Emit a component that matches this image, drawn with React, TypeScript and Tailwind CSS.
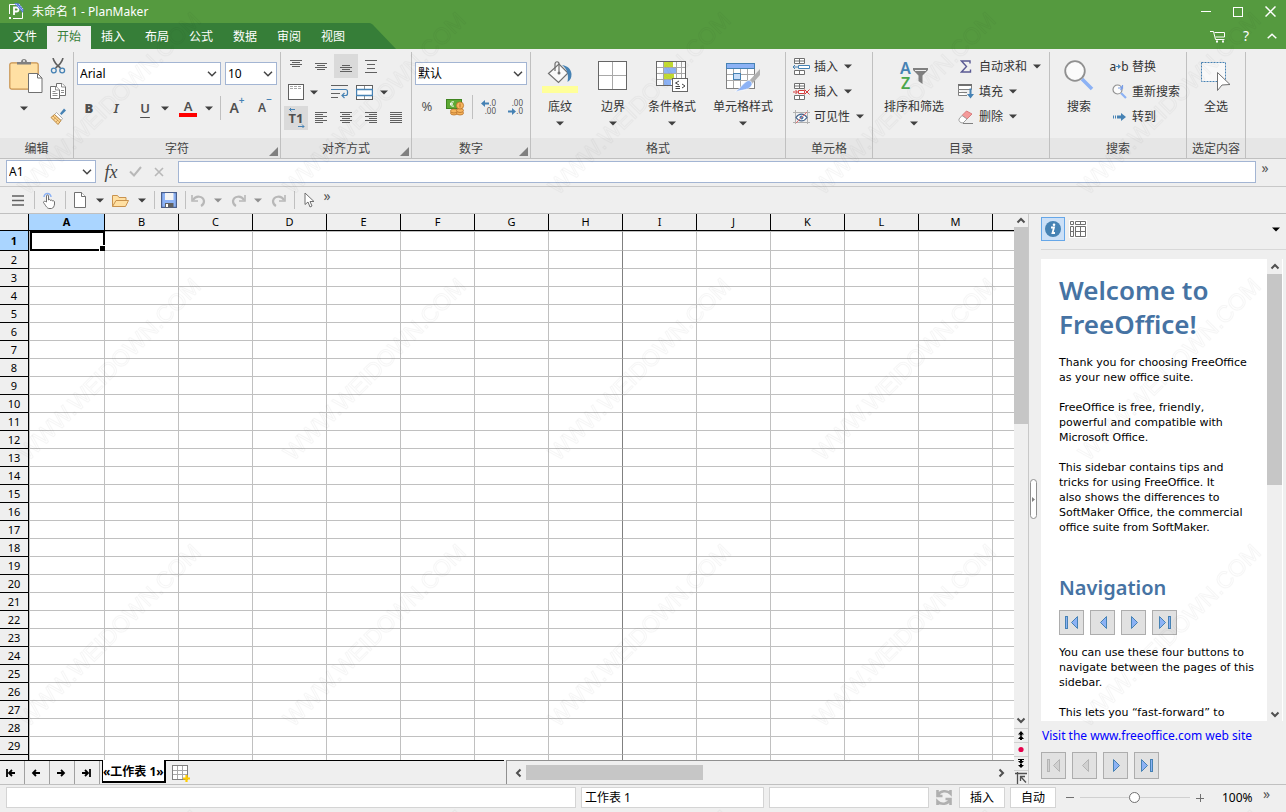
import React, { useLayoutEffect, useRef, useState } from 'react';

const uiFont = "font-['Noto_Sans','Noto_Sans_CJK_SC',sans-serif]";

const tabs = ['文件', '开始', '插入', '布局', '公式', '数据', '审阅', '视图'];

/* ---------- small building blocks ---------- */

const Caret = ({ className = 'text-[#404040]' }: { className?: string }) => (
  <svg width="8" height="5" viewBox="0 0 8 5" className={className} aria-hidden="true">
    <path d="M0 .5h8L4 4.5z" fill="currentColor" />
  </svg>
);

const Chevron = ({ className = '' }: { className?: string }) => (
  <svg width="10" height="6" viewBox="0 0 10 6" className={className} aria-hidden="true">
    <path d="M1 .8 5 4.8 9 .8" fill="none" stroke="#444" strokeWidth="1.5" />
  </svg>
);

const ScrollArrow = ({ dir }: { dir: 'up' | 'down' | 'left' | 'right' }) => {
  const paths = {
    up: 'M1.5 6.5 5 3l3.5 3.5',
    down: 'M1.5 3.5 5 7l3.5-3.5',
    left: 'M6.5 1.5 3 5l3.5 3.5',
    right: 'M3.5 1.5 7 5 3.5 8.5',
  };
  return (
    <svg width="10" height="10" viewBox="0 0 10 10" aria-hidden="true">
      <path d={paths[dir]} fill="none" stroke="#505050" strokeWidth="2" />
    </svg>
  );
};

type ComboProps = { label: string; options: string[]; className: string };

const Combo: React.FC<ComboProps> = ({ label, options, className }) => (
  <div className={`relative ${className}`}>
    <select
      aria-label={label}
      className="block h-full w-full appearance-none border border-[#a3b5d3] bg-white pl-[2px] text-xs text-black outline-none"
    >
      {options.map((o) => (
        <option key={o}>{o}</option>
      ))}
    </select>
    <Chevron className="pointer-events-none absolute top-1/2 right-1 -translate-y-1/2" />
  </div>
);

type GroupProps = { title: string; width: string; corner?: boolean; children: React.ReactNode };

const Group: React.FC<GroupProps> = ({ title, width, corner, children }) => (
  <section className={`flex shrink-0 flex-col border-r border-[#c0c0c0] ${width}`}>
    <div className="flex h-[86px]">{children}</div>
    <div className="relative h-5 bg-[#e6e6e6] pt-px text-center text-xs leading-5 text-[#444]">
      {title}
      {corner && (
        <svg width="9" height="9" viewBox="0 0 9 9" className="absolute right-[2px] bottom-[2px]" aria-hidden="true">
          <path d="M9 0v9H0z" fill="#808080" />
        </svg>
      )}
    </div>
  </section>
);

const IconButton = ({ label, className = 'w-6', active, children }: { label: string; className?: string; active?: boolean; children: React.ReactNode }) => (
  <button aria-label={label} className={`flex h-6 shrink-0 items-center justify-center ${active ? 'bg-[#dadada]' : ''} ${className}`}>
    {children}
  </button>
);

const BigButton = ({ label, width, caret = true, children }: { label: string; width: string; caret?: boolean; children: React.ReactNode }) => (
  <button className={`flex shrink-0 flex-col items-center pt-1 text-xs text-[#333] ${width}`}>
    <span className="mb-px flex h-10 items-center justify-center">{children}</span>
    <span className="leading-5 whitespace-nowrap">{label}</span>
    {caret && <Caret className="mt-1 text-[#404040]" />}
  </button>
);

const RowButton = ({ label, caret, children }: { label: string; caret?: boolean; children: React.ReactNode }) => (
  <button className="flex h-[25px] items-center text-xs text-[#333]">
    <span className="mr-1 flex w-[18px] justify-center">{children}</span>
    <span className="whitespace-nowrap">{label}</span>
    {caret && <Caret className="ml-[6px] text-[#404040]" />}
  </button>
);

const Separator = ({ className = 'h-6' }: { className?: string }) => <div className={`w-px shrink-0 bg-[#c0c0c0] ${className}`} />;

const Lines = ({ rows: list }: { rows: [number, number, number][] }) => (
  <svg width="14" height="16" viewBox="0 0 14 16" aria-hidden="true">
    {list.map(([x, y, w], i) => (
      <rect key={i} x={x} y={y} width={w} height="1" fill="#606060" />
    ))}
  </svg>
);

/* ---------- title bar ---------- */

const TitleBar = () => (
  <header className="shrink-0 bg-[#559a3f] text-xs text-white">
    <div className="flex h-[23px] items-center">
      <svg width="17" height="17" viewBox="0 0 17 17" className="ml-2" aria-hidden="true">
        <path d="M1.500 11V1.500H10M14.500 8v7.500H5" fill="none" stroke="#fff" />
        <path d="M6 12V4.500h2.500a2 2 0 0 1 0 4H6" fill="none" stroke="#fff" strokeWidth="1.800" />
        <rect x="1" y="14" width="2" height="2" fill="#fff" />
        <path d="m6 0 5 .5 4.500 6L15 10z" fill="#5b7be0" />
        <path d="m8 1 7 7M11 1l4 5" stroke="#dfe6ff" strokeWidth=".8" strokeDasharray="1.500 1" />
      </svg>
      <h1 className="ml-[7px] flex-1">未命名 1 - PlanMaker</h1>
      <button aria-label="最小化" className="flex h-full w-8 items-center justify-center">
        <span className="h-px w-[10px] bg-white" />
      </button>
      <button aria-label="最大化" className="flex h-full w-8 items-center justify-center">
        <span className="size-[10px] border border-white" />
      </button>
      <button aria-label="关闭" className="flex h-full w-8 items-center justify-center">
        <svg width="11" height="11" viewBox="0 0 11 11" aria-hidden="true">
          <path d="m.5.5 10 10m0-10-10 10" stroke="#fff" strokeWidth="1.500" />
        </svg>
      </button>
    </div>
    <div className="flex h-[26px]">
      <nav className="flex items-end bg-[#367e38] pr-[13px] pl-[3px]">
        {tabs.map((t) => (
          <button key={t} className={`h-[23px] w-11 pb-px ${t === '开始' ? 'bg-[#efefef] text-[#367e38]' : ''}`}>
            {t}
          </button>
        ))}
      </nav>
      <svg width="28" height="26" viewBox="0 0 28 26" aria-hidden="true">
        <path d="M0 0c4 0 5 2 7 4l21 22H0z" fill="#367e38" />
      </svg>
      <div className="ml-auto flex items-center">
        <button aria-label="购物车" className="mr-[2px] flex w-7 justify-center">
          <svg width="16" height="13" viewBox="0 0 16 13" fill="none" stroke="#fff" aria-hidden="true">
            <path d="M0 1.500h3.500l2 8h9M4.500 2.500h10v4.500H5.500" />
            <path d="M6 11.500h2m4 0h2" strokeWidth="2" />
          </svg>
        </button>
        <button aria-label="帮助" className="w-6 text-sm leading-6">?</button>
        <button aria-label="折叠功能区" className="flex w-7 justify-center">
          <svg width="10" height="6" viewBox="0 0 10 6" aria-hidden="true">
            <path d="m.7 5.300 4.300-4 4.300 4" fill="none" stroke="#fff" strokeWidth="1.500" />
          </svg>
        </button>
      </div>
    </div>
  </header>
);

/* ---------- ribbon ---------- */

const EditGroup = () => (
  <Group title="编辑" width="w-[74px]">
    <button aria-label="粘贴" className="ml-2 flex w-9 flex-col items-center pt-[6px]">
      <svg width="34" height="36" viewBox="0 0 34 36" aria-hidden="true">
        <rect x=".8" y="4.800" width="28.400" height="26.400" rx="2" fill="#ffe0a3" stroke="#c8924e" strokeWidth="1.200" />
        <path d="M8 6.500V4h4c0-4 6-4 6 0h4v2.500z" fill="#808080" />
        <circle cx="15" cy="3" r="1" fill="#efefef" />
        <path d="M19.500 15.500h9l4.500 4.500v14.500H19.500z" fill="#fff" stroke="#707070" />
        <path d="M28.500 15.500V20H33" fill="none" stroke="#707070" />
      </svg>
      <Caret className="mt-3 mr-1 text-[#404040]" />
    </button>
    <div className="ml-1 flex flex-col gap-px pt-[2px]">
      <IconButton label="剪切" className="w-5">
        <svg width="16" height="16" viewBox="0 0 16 16" fill="none" aria-hidden="true">
          <path d="M3 0c1 4 3.500 7 7.500 10M13 0c-1 4-3.500 7-7.500 10" stroke="#606060" strokeWidth="1.600" />
          <circle cx="3.800" cy="12.500" r="2.400" stroke="#4682b4" strokeWidth="1.300" />
          <circle cx="12.200" cy="12.500" r="2.400" stroke="#4682b4" strokeWidth="1.300" />
        </svg>
      </IconButton>
      <IconButton label="复制" className="w-5">
        <svg width="16" height="16" viewBox="0 0 16 16" fill="#fff" stroke="#707070" aria-hidden="true">
          <path d="M6.500 12.500v-12H12L15.500 4v8.500z" />
          <path d="M.5 15.500v-12H6L9.500 7v8.500z" />
          <path d="M5.500 3.500V7h4M11.500.5V4h4M2.500 8.500h3m-3 2h5m-5 2h5M11 7.500h3m-3 2h3" strokeWidth=".8" />
        </svg>
      </IconButton>
      <IconButton label="格式刷" className="w-5">
        <svg width="17" height="17" viewBox="0 0 17 17" aria-hidden="true">
          <path d="m10 5.500 4-5 2 2-4.500 4.500z" fill="#4682b4" />
          <path d="m6.500 4.500 6 6-1.500 2L4.500 6.500z" fill="#fff" stroke="#909090" strokeWidth=".7" />
          <path d="M4.500 6.500 11 12.500 8 16.500 1 9.500z" fill="#ffd591" stroke="#b98843" />
          <path d="m3 8 6.500 6M5.500 10l-2 1.500m4.500.500-2 2" stroke="#b98843" strokeWidth=".7" />
        </svg>
      </IconButton>
    </div>
  </Group>
);

const FontGroup = () => (
  <Group title="字符" width="w-[207px]" corner>
    <div className="flex flex-1 flex-col pt-[10px]">
      <div className="flex gap-1 pl-[3px]">
        <Combo label="字体" options={['Arial', 'Tahoma']} className="h-[23px] w-36" />
        <Combo label="字号" options={['10', '11', '12']} className="h-[23px] w-[52px]" />
      </div>
      <div className="mt-[11px] flex items-center pl-[2px] text-sm font-semibold text-[#505050]">
        <IconButton label="加粗" className="w-[26px] text-[13px]"><b>B</b></IconButton>
        <IconButton label="倾斜" className="w-7 text-[13px]"><i>I</i></IconButton>
        <IconButton label="下划线" className="w-[30px] text-[13px]"><span className="underline underline-offset-4">U</span></IconButton>
        <IconButton label="下划线选项" className="w-[10px]"><Caret /></IconButton>
        <IconButton label="字体颜色" className="ml-px w-[34px] flex-col">
          <span className="text-[13px] leading-[14px]">A</span>
          <span className="h-1 w-[18px] bg-[#ff0000]" />
        </IconButton>
        <IconButton label="颜色选项" className="w-2"><Caret /></IconButton>
        <Separator className="ml-[7px] h-6" />
        <IconButton label="增大字号" className="ml-[2px] w-7">
          A<span className="-mt-4 text-[10px] text-[#4682b4]">+</span>
        </IconButton>
        <IconButton label="减小字号" className="w-7 text-xs">
          A<span className="-mt-4 text-[10px] text-[#4682b4]">−</span>
        </IconButton>
      </div>
    </div>
  </Group>
);

const AlignGroup = () => (
  <Group title="对齐方式" width="w-[131px]" corner>
    <div className="flex flex-col gap-[2px] pt-[2px] pl-[3px]">
      <div className="flex gap-px">
        <IconButton label="顶端对齐"><Lines rows={[[1, 2, 12], [3, 4, 8], [1, 6, 12], [3, 8, 8]]} /></IconButton>
        <IconButton label="垂直居中"><Lines rows={[[1, 5, 12], [3, 7, 8], [1, 9, 12], [3, 11, 8]]} /></IconButton>
        <IconButton label="底端对齐" active><Lines rows={[[3, 7, 8], [1, 9, 12], [3, 11, 8], [1, 13, 12]]} /></IconButton>
        <IconButton label="分散对齐"><Lines rows={[[1, 2, 12], [3, 6, 8], [3, 10, 8], [1, 14, 12]]} /></IconButton>
      </div>
      <div className="flex">
        <IconButton label="边框">
          <svg width="16" height="16" viewBox="0 0 16 16" aria-hidden="true">
            <rect x=".5" y=".5" width="15" height="15" fill="#fff" stroke="#606060" />
            <path d="M2 2.500h12M2 4.500h12" stroke="#909090" strokeDasharray="3 1" strokeWidth=".8" />
          </svg>
        </IconButton>
        <IconButton label="边框选项" className="w-3"><Caret /></IconButton>
        <IconButton label="自动换行" className="ml-2 w-6">
          <svg width="18" height="14" viewBox="0 0 18 14" fill="none" aria-hidden="true">
            <path d="M0 .5h17M0 8.500h9M0 12.500h7" stroke="#606060" />
            <path d="M0 4.500h14.500q2 0 2 2v2q0 2-2 2H11m2.500-2.500L11 10.500l2.500 2.500" stroke="#4682b4" strokeWidth="1.200" />
          </svg>
        </IconButton>
        <IconButton label="合并单元格">
          <svg width="17" height="15" viewBox="0 0 17 15" aria-hidden="true">
            <rect x=".5" y=".5" width="16" height="14" fill="#fff" stroke="#606060" />
            <path d="M8.500 1v3m0 7v3" stroke="#909090" />
            <path d="M0 4.500h17M0 10.500h17M.5 4v7m16-7v7" stroke="#4682b4" strokeWidth="1.400" />
          </svg>
        </IconButton>
        <IconButton label="合并选项" className="ml-[3px] w-[10px]"><Caret /></IconButton>
      </div>
      <div className="flex gap-px">
        <IconButton label="文字方向" active>
          <span className="relative text-[13px] leading-4 font-bold text-[#505050]">
            T1
            <svg width="18" height="20" viewBox="0 0 18 20" className="absolute -top-[2px] -left-[1px]" fill="none" stroke="#4682b4" aria-hidden="true">
              <path d="M7 1.500H1.500M3.500-.5l-2 2 2 2M10 18.500h6m-2-2 2 2-2 2" />
            </svg>
          </span>
        </IconButton>
        <IconButton label="左对齐"><Lines rows={[[1, 2, 12], [1, 4, 8], [1, 6, 12], [1, 8, 8], [1, 10, 12], [1, 12, 8]]} /></IconButton>
        <IconButton label="居中"><Lines rows={[[1, 2, 12], [3, 4, 8], [1, 6, 12], [3, 8, 8], [1, 10, 12], [3, 12, 8]]} /></IconButton>
        <IconButton label="右对齐"><Lines rows={[[1, 2, 12], [5, 4, 8], [1, 6, 12], [5, 8, 8], [1, 10, 12], [5, 12, 8]]} /></IconButton>
        <IconButton label="两端对齐"><Lines rows={[[1, 2, 12], [1, 4, 12], [1, 6, 12], [1, 8, 12], [1, 10, 12], [1, 12, 12]]} /></IconButton>
      </div>
    </div>
  </Group>
);

const NumberGroup = () => (
  <Group title="数字" width="w-[119px]" corner>
    <div className="flex flex-1 flex-col pt-[10px] pl-[3px]">
      <Combo label="数字格式" options={['默认', '数值', '货币']} className="h-[23px] w-28" />
      <div className="mt-[10px] flex items-center text-[#555]">
        <IconButton label="百分比" className="w-6 text-[13px]">%</IconButton>
        <IconButton label="货币" className="ml-1 w-6">
          <svg width="19" height="18" viewBox="0 0 19 18" aria-hidden="true">
            <rect x=".5" y="1.500" width="15" height="9" fill="#5da934" stroke="#3f8420" />
            <path d="M8 4a2.300 2.300 0 1 0 0 4M4 5.300h3M4 6.800h3" fill="none" stroke="#fff" strokeWidth=".9" />
            <g fill="#f6b45c" stroke="#b8712a" strokeWidth=".8">
              <ellipse cx="8" cy="15" rx="3.500" ry="2" />
              <ellipse cx="8" cy="13" rx="3.500" ry="2" />
              <ellipse cx="14" cy="15" rx="3.500" ry="2" />
              <ellipse cx="14" cy="12.500" rx="3.500" ry="2" />
              <circle cx="14" cy="7.500" r="3.600" />
            </g>
            <path d="M14 5.500v4" stroke="#b8712a" />
          </svg>
        </IconButton>
        <Separator className="mr-[3px] ml-[5px] h-6" />
        <IconButton label="增加小数位" className="w-6 flex-col items-end pr-1 text-[8px] leading-[8px]">
          <span className="flex items-center self-end">
            <svg width="8" height="7" viewBox="0 0 8 7" aria-hidden="true">
              <path d="M4 0v2.500h4v2H4V7L0 3.500z" fill="#4682b4" />
            </svg>
            .0
          </span>
          <span className="self-end">.00</span>
        </IconButton>
        <IconButton label="减少小数位" className="ml-[3px] w-6 flex-col pr-1 text-[8px] leading-[8px]">
          <span className="self-end">.00</span>
          <span className="flex items-center self-end">
            <svg width="8" height="7" viewBox="0 0 8 7" aria-hidden="true">
              <path d="M4 0v2.500H0v2h4V7l4-3.500z" fill="#4682b4" />
            </svg>
            .0
          </span>
        </IconButton>
      </div>
    </div>
  </Group>
);

const FormatGroup = () => (
  <Group title="格式" width="w-[255px]">
    <div className="flex pl-[3px]">
      <BigButton label="底纹" width="w-[52px]">
        <svg width="36" height="34" viewBox="0 0 36 34" aria-hidden="true">
          <rect y="27" width="36" height="7" fill="#ffff99" />
          <path d="M6.500 14.500 17 5l9 9-9.500 9.500z" fill="#fafafa" stroke="#707070" strokeWidth="1.200" />
          <path d="M13 12V5c0-3 4-3 4 0v8" fill="none" stroke="#707070" strokeWidth="1.200" />
          <circle cx="17" cy="14" r="1.500" fill="#707070" />
          <path d="M20 6c6 1 9 4 9.500 9 0 4-1 6-4 8 1-5 1-12-5.500-17z" fill="#4682b4" />
        </svg>
      </BigButton>
      <BigButton label="边界" width="w-[54px]">
        <svg width="30" height="30" viewBox="0 0 30 30" aria-hidden="true">
          <rect x=".5" y=".5" width="28" height="28" fill="#fff" stroke="#666" />
          <path d="M14.500 1v27M1 14.500h27" stroke="#a8a8a8" />
        </svg>
      </BigButton>
      <BigButton label="条件格式" width="w-16">
        <svg width="32" height="32" viewBox="0 0 32 32" aria-hidden="true">
          <rect x=".5" y="1.500" width="29" height="24" fill="#fff" stroke="#666" />
          <path d="M8 2h9v5H8zM8 14h10v5H8z" fill="#c3dc32" />
          <path d="M8 8h12v5H8zM8 20h7v5H8z" fill="#8cb2f5" />
          <path d="M1 7.500h28M1 13.500h28M1 19.500h28M7.500 2v23M20.500 2v23M25.500 2v23" stroke="#a8a8a8" />
          <rect x="16.500" y="18.500" width="15" height="13" fill="#fff" stroke="#666" />
          <path d="m23 21-3.500 2 3.500 2M26 24l3 2-3 2M19.500 26.500H24m-4.500 2H24" fill="none" stroke="#444" />
        </svg>
      </BigButton>
      <BigButton label="单元格样式" width="w-[78px]">
        <svg width="34" height="32" viewBox="0 0 34 32" aria-hidden="true">
          <rect x=".5" y="3.500" width="28" height="25" fill="#fff" stroke="#808080" />
          <path d="M1 14.500h28M1 20.500h28M7.500 9v19M14.500 9v19M21.500 9v19" stroke="#a8a8a8" />
          <rect x=".5" y="3.500" width="28" height="5" fill="#8cb2f5" stroke="#4682b4" />
          <rect x="7.500" y="13.500" width="7" height="6" fill="#c6dcf8" stroke="#4682b4" />
          <path d="M34 9v6l-8 9-3-3z" fill="#b0b0b0" />
          <path d="M22 20.500c3 0 4 1.500 4 4-2 6-10 5-17.500 7.500 6-3 8-9 13.500-11.500z" fill="#8cb2f5" stroke="#fff" strokeWidth=".6" />
        </svg>
      </BigButton>
    </div>
  </Group>
);

const CellGroup = () => (
  <Group title="单元格" width="w-[87px]">
    <div className="flex flex-col pt-[2px] pl-[6px]">
      <RowButton label="插入" caret>
        <svg width="17" height="17" viewBox="0 0 17 17" fill="#fff" aria-hidden="true">
          <path d="M1.500.5h10v5h-10zM1.500 12.500h10v4h-10zM6.500.500v5m0 7v4M1.500 3h10" stroke="#707070" />
          <path d="M5.500 7.500h11v3h-11z" stroke="#4682b4" />
          <path d="M5 9H0m2-2L0 9l2 2" fill="none" stroke="#4682b4" />
        </svg>
      </RowButton>
      <RowButton label="插入" caret>
        <svg width="17" height="17" viewBox="0 0 17 17" fill="#fff" aria-hidden="true">
          <path d="M1.500.5h10v5h-10zM1.500 12.500h10v4h-10zM6.500.500v5m0 7v4M1.500 3h10" stroke="#707070" />
          <path d="M5.500 7.500h6v3h-6z" stroke="#d43c3c" />
          <path d="M0 9h4M2.500 7l2 2-2 2M11.500 6.500l5 5M16.500 6.500l-5 5" fill="none" stroke="#d43c3c" />
        </svg>
      </RowButton>
      <RowButton label="可见性" caret>
        <svg width="17" height="14" viewBox="0 0 17 14" fill="none" aria-hidden="true">
          <path d="M0 2.500h17M0 12.500h17M2.500 0v14M14.500 0v14" stroke="#b0b0b0" />
          <path d="M3 7.500c3-4.500 8-4.500 11 0-3 4.500-8 4.500-11 0z" fill="#fff" stroke="#46648c" strokeWidth="1.200" />
          <circle cx="8.500" cy="7.500" r="2" fill="#4682b4" />
          <path d="m3 13 11-11" stroke="#e07070" />
        </svg>
      </RowButton>
    </div>
  </Group>
);

const ContentGroup = () => (
  <Group title="目录" width="w-[177px]">
    <div className="flex pl-[3px]">
      <BigButton label="排序和筛选" width="w-[76px]">
        <span className="text-base leading-[15px] font-semibold">
          <span className="block text-[#4682b4]">A</span>
          <span className="block text-[#4ca64c]">Z</span>
        </span>
        <svg width="15" height="16" viewBox="0 0 15 16" className="ml-[2px]" aria-hidden="true">
          <path d="M0 0h15v2L9.500 7.500V16l-4-3V7.500L0 2z" fill="#808080" />
          <path d="M2 2.500h11" stroke="#efefef" />
        </svg>
      </BigButton>
      <div className="flex flex-col pt-[2px] pl-[5px]">
        <RowButton label="自动求和" caret>
          <svg width="12" height="13" viewBox="0 0 12 13" aria-hidden="true">
            <path d="M10 3.500V1H1.500l5 5.500-5 5.500h9V9.500" fill="none" stroke="#5b5b94" strokeWidth="1.400" />
          </svg>
        </RowButton>
        <RowButton label="填充" caret>
          <svg width="16" height="15" viewBox="0 0 16 15" aria-hidden="true">
            <path d="M.5 1v4.500h13V1M.5 5.500v6H9M.5 8.500H9" fill="#fff" stroke="#808080" />
            <path d="M0 0h14v2H0z" fill="#707070" />
            <path d="M11.500 4.500h2V10h2.500l-3.500 4.500L9 10h2.500z" fill="#4682b4" />
          </svg>
        </RowButton>
        <RowButton label="删除" caret>
          <svg width="16" height="14" viewBox="0 0 16 14" aria-hidden="true">
            <path d="M8.500 1 14 4l-5 5-5-3.500z" fill="#f49a9a" stroke="#d87c7c" />
            <path d="m4 5.500 5 3.500-4 4c-3 0-4.500-2-4-4z" fill="#fff" stroke="#a0a0a0" />
            <path d="M5 13.500h10" stroke="#808080" />
          </svg>
        </RowButton>
      </div>
    </div>
  </Group>
);

const SearchGroup = () => (
  <Group title="搜索" width="w-[137px]">
    <BigButton label="搜索" width="w-[58px]" caret={false}>
      <svg width="30" height="32" viewBox="0 0 30 32" aria-hidden="true">
        <path d="m18 19 10 10" stroke="#8cb2f5" strokeWidth="3.500" />
        <circle cx="11" cy="11" r="9.800" fill="#fbfbfb" stroke="#909090" strokeWidth="1.800" />
      </svg>
    </BigButton>
    <div className="flex flex-col pt-[2px] pl-[2px]">
      <RowButton label="替换">
        <span className="flex items-center text-xs leading-4">
          a
          <svg width="5" height="5" viewBox="0 0 5 5" aria-hidden="true">
            <path d="M0 2h2V0l3 2.500L2 5V3H0z" fill="#4682b4" />
          </svg>
          b
        </span>
      </RowButton>
      <RowButton label="重新搜索">
        <svg width="15" height="15" viewBox="0 0 15 15" aria-hidden="true">
          <path d="m9 9 5 5" stroke="#8cb2f5" strokeWidth="2.200" />
          <circle cx="5.500" cy="5.500" r="4.500" fill="#fbfbfb" stroke="#909090" strokeWidth="1.200" />
          <path d="M6 4h4.500V1M8.500 2.500l2 1.500L8.500 6" fill="none" stroke="#7a9fe8" strokeWidth="1.200" />
        </svg>
      </RowButton>
      <RowButton label="转到">
        <svg width="13" height="8" viewBox="0 0 13 8" aria-hidden="true">
          <path d="M0 2.500h1v3H0zM2 2.500h1v3H2zM4 2.500h4V0l5 4-5 4V5.500H4z" fill="#4682b4" />
        </svg>
      </RowButton>
    </div>
  </Group>
);

const SelectGroup = () => (
  <Group title="选定内容" width="w-[59px]">
    <BigButton label="全选" width="w-full" caret={false}>
      <svg width="30" height="32" viewBox="0 0 30 32" aria-hidden="true">
        <rect x=".5" y="2.500" width="24" height="19" fill="#f8f8f8" stroke="#4682b4" strokeDasharray="2 1" />
        <path d="M16.500 12.500v18l4.500-5.500 8-.5z" fill="#fff" stroke="#707070" />
      </svg>
    </BigButton>
  </Group>
);

const Ribbon = () => (
  <div className="flex shrink-0 border-b border-[#c0c0c0] pt-[3px]">
    <EditGroup />
    <FontGroup />
    <AlignGroup />
    <NumberGroup />
    <FormatGroup />
    <CellGroup />
    <ContentGroup />
    <SearchGroup />
    <SelectGroup />
    <div className="flex flex-1 flex-col justify-end">
      <div className="h-5 bg-[#e6e6e6]" />
    </div>
  </div>
);

/* ---------- formula bar and quick access ---------- */

const FormulaBar = () => (
  <div className="flex h-7 shrink-0 items-center border-b border-[#c8c8c8] pr-3 pb-[2px] pl-[6px]">
    <Combo label="名称框" options={['A1']} className="h-[23px] w-[90px]" />
    <button aria-label="插入函数" className="ml-[3px] w-6 font-['Liberation_Serif',serif] text-lg leading-5 text-[#444] italic">fx</button>
    <button aria-label="确认" className="flex w-6 justify-center">
      <svg width="13" height="11" viewBox="0 0 13 11" aria-hidden="true">
        <path d="m1 5.500 4 4L12 1" fill="none" stroke="#b8b8b8" strokeWidth="2" />
      </svg>
    </button>
    <button aria-label="取消" className="flex w-6 justify-center">
      <svg width="10" height="10" viewBox="0 0 10 10" aria-hidden="true">
        <path d="m1 1 8 8m0-8L1 9" stroke="#b8b8b8" strokeWidth="1.600" />
      </svg>
    </button>
    <input aria-label="编辑栏" className="ml-[7px] h-[22px] min-w-0 flex-1 border border-[#a3b5d3] bg-white px-1 text-xs outline-none" />
    <button aria-label="更多" className="w-[18px] pb-2 text-sm leading-4 text-[#555]">»</button>
  </div>
);

const Undo = ({ flip, label }: { flip?: boolean; label: string }) => (
  <IconButton label={label} className="w-5">
    <svg width="15" height="13" viewBox="0 0 15 13" className={flip ? '-scale-x-100' : ''} aria-hidden="true">
      <path d="M1 1v6h6" fill="none" stroke="#b8b8b8" strokeWidth="1.600" />
      <path d="M2 6c3-5 10-4 11 1 0 3-1 4-3 5" fill="none" stroke="#b8b8b8" strokeWidth="2.200" />
    </svg>
  </IconButton>
);

const QuickBar = () => (
  <div className="flex h-[27px] shrink-0 items-center border-b border-[#c0c0c0] pl-2">
    <IconButton label="菜单" className="w-5">
      <svg width="12" height="11" viewBox="0 0 12 11" aria-hidden="true">
        <path d="M0 1h12M0 5.500h12M0 10h12" stroke="#606060" strokeWidth="1.500" />
      </svg>
    </IconButton>
    <Separator className="ml-[6px] h-[18px]" />
    <IconButton label="触摸模式" className="ml-1 w-5">
      <svg width="14" height="18" viewBox="0 0 14 18" aria-hidden="true">
        <path d="M2 6a3.500 3.500 0 1 1 7 0" fill="none" stroke="#8cb2f5" strokeWidth="1.500" />
        <path d="M4.500 11V5c0-1.500 2-1.500 2 0v4c1-1 2-.5 2 .5 1-.8 2-.3 2 .5 1-.6 2 0 2 1v2c0 2-1.500 4.500-3 4.500H7c-2 0-4-4-5.500-6 0-1.500 1.500-1.500 3-.5z" fill="#fff" stroke="#707070" />
      </svg>
    </IconButton>
    <Separator className="ml-[6px] h-[18px]" />
    <IconButton label="新建" className="ml-1 w-5">
      <svg width="12" height="16" viewBox="0 0 12 16" fill="#fff" stroke="#707070" aria-hidden="true">
        <path d="M.5.500h7l4 4v11H.5z" />
        <path d="M7.500.500v4h4" />
      </svg>
    </IconButton>
    <IconButton label="新建选项" className="ml-1 w-3"><Caret /></IconButton>
    <IconButton label="打开" className="ml-1 w-5">
      <svg width="17" height="13" viewBox="0 0 17 13" fill="#ffe0a3" stroke="#c8924e" aria-hidden="true">
        <path d="M.5 12.500v-11h5l1.500 2h7v3" />
        <path d="m.5 12.500 3.500-6h12.500l-3 6z" />
      </svg>
    </IconButton>
    <IconButton label="打开选项" className="ml-1 w-4"><Caret /></IconButton>
    <Separator className="ml-1 h-[18px]" />
    <IconButton label="保存" className="ml-1 w-5">
      <svg width="16" height="16" viewBox="0 0 16 16" aria-hidden="true">
        <rect x=".6" y=".6" width="14.800" height="14.800" fill="#8cb2f5" stroke="#4a5f8c" strokeWidth="1.200" />
        <path d="M4 1h8.500v7H4z" fill="#f4f4f4" />
        <path d="M4 11h8.500v4.500H4z" fill="#606060" />
        <path d="M5 12h2v3H5z" fill="#fff" />
      </svg>
    </IconButton>
    <Separator className="ml-[6px] mr-[2px] h-[18px]" />
    <Undo label="撤销" />
    <IconButton label="撤销选项" className="w-5"><Caret className="text-[#909090]" /></IconButton>
    <Undo label="恢复" flip />
    <IconButton label="恢复选项" className="w-5"><Caret className="text-[#909090]" /></IconButton>
    <Undo label="重复" flip />
    <Separator className="ml-[6px] h-[18px]" />
    <IconButton label="选择" className="ml-1 w-5">
      <svg width="11" height="16" viewBox="0 0 11 16" aria-hidden="true">
        <path d="M1 1v11.500L4 10l2 5 2-1-2-4.500h4z" fill="#fff" stroke="#707070" />
      </svg>
    </IconButton>
    <button aria-label="更多" className="w-4 pb-2 text-sm leading-4 text-[#555]">»</button>
  </div>
);

/* ---------- sheet ---------- */

const HEAD_W = 29;
const FIRST_W = 76;
const COL_W = 74;
const ROW_H = 18;

const Sheet = () => {
  const box = useRef<HTMLDivElement>(null);
  const [size, setSize] = useState({ w: 0, h: 0 });

  useLayoutEffect(() => {
    const el = box.current;
    if (!el) return;
    const measure = () => setSize({ w: el.clientWidth, h: el.clientHeight });
    measure();
    const observer = new ResizeObserver(measure);
    observer.observe(el);
    return () => observer.disconnect();
  }, []);

  // only as many rows and columns as the pane can show
  const columnCount = Math.min(26, 1 + Math.max(0, Math.ceil((size.w - HEAD_W - FIRST_W) / COL_W)));
  const rowCount = 1 + Math.max(0, Math.ceil((size.h - 37) / ROW_H));
  const columns = 'ABCDEFGHIJKLMNOPQRSTUVWXYZ'.slice(0, columnCount).split('');
  const rows = Array.from({ length: rowCount }, (_, i) => i + 1);

  // a header is labelled once its middle is in view
  const columnLabel = (c: string, i: number) => (HEAD_W + FIRST_W + (i - 1) * COL_W + COL_W / 2 < size.w ? c : '');
  const rowLabel = (r: number) => (37 + (r - 2) * ROW_H + ROW_H / 2 < size.h ? r : '');

  return (
    <div ref={box} className="min-h-0 flex-1 overflow-hidden bg-white">
      <table
        className="table-fixed border-separate border-spacing-0 text-[11px] leading-none text-black"
        style={{ width: HEAD_W + FIRST_W + (columnCount - 1) * COL_W }}
      >
        <thead>
          <tr className="h-[17px]">
            <th className="w-[29px] border-r border-b border-black bg-[#efefef]" />
            {columns.map((c, i) => (
              <th
                key={c}
                className={`border-r border-b border-black p-0 pb-[2px] ${c === 'A' ? 'w-[76px] bg-[#aad5ff] font-bold' : 'w-[74px] bg-[#efefef] font-normal'}`}
              >
                {columnLabel(c, i)}
              </th>
            ))}
          </tr>
        </thead>
        <tbody>
          {rows.map((r) => (
            <tr key={r} className={r === 1 ? 'h-5' : 'h-[18px]'}>
              <th className={`border-r border-b border-black p-0 ${r === 1 ? 'bg-[#aad5ff] font-bold' : 'bg-[#efefef] font-normal'}`}>{rowLabel(r)}</th>
              {columns.map((c) => (
                <td
                  key={c}
                  className={`border-b border-b-[#c0c0c0] p-0 ${c === 'H' ? 'border-r border-r-[#808080]' : 'border-r border-r-[#c0c0c0]'} ${c === 'A' ? 'border-l border-l-[#c0c0c0]' : ''} ${r === 1 ? 'border-t border-t-[#c0c0c0]' : ''}`}
                >
                  {r === 1 && c === 'A' && (
                    <div className="relative -m-px ml-0 h-5 border-2 border-black">
                      <span className="absolute -right-[2px] -bottom-[2px] size-[6px] border-t border-l border-white bg-black" />
                    </div>
                  )}
                </td>
              ))}
            </tr>
          ))}
        </tbody>
      </table>
    </div>
  );
};

const sheetNav = [
  { label: '第一张', d: 'M1 1v8M9 5H3m3-3L3 5l3 3' },
  { label: '上一张', d: 'M9 5H2m3-3L2 5l3 3' },
  { label: '下一张', d: 'M1 5h7M5 2l3 3-3 3' },
  { label: '最后一张', d: 'M9 1v8M1 5h6M4 2l3 3-3 3' },
];

const SheetTabs = () => (
  <div className="flex h-6 shrink-0">
    <div className="flex w-[504px] border-t border-black">
      {sheetNav.map((n) => (
        <button key={n.label} aria-label={n.label} className="flex w-[25px] items-center justify-center border-r border-[#a0a0a0] pr-[2px]">
          <svg width="10" height="10" viewBox="0 0 10 10" aria-hidden="true">
            <path d={n.d} fill="none" stroke="#000" strokeWidth="1.800" />
          </svg>
        </button>
      ))}
      <button className="-mt-px ml-[2px] h-[23px] border-r-2 border-b-2 border-l border-black bg-white pt-[3px] text-xs font-bold whitespace-nowrap text-black">
        «工作表 1»
      </button>
      <button aria-label="新建工作表" className="ml-[6px] flex items-center">
        <svg width="18" height="18" viewBox="0 0 18 18" aria-hidden="true">
          <rect x=".5" y="1.500" width="15" height="14" fill="#fff" stroke="#808080" />
          <path d="M1 6.500h14M1 10.500h14M5.500 2v13M10.500 2v13" stroke="#a8a8a8" />
          <path d="M14.500 11v7M11 14.500h7" stroke="#ffcc00" strokeWidth="2.200" />
        </svg>
      </button>
    </div>
    <div className="ml-[2px] flex flex-1 items-center border-t border-l border-[#909090] pr-1">
      <button aria-label="向左滚动" className="ml-[7px] w-3"><ScrollArrow dir="left" /></button>
      <div className="h-[15px] w-[177px] bg-[#c6c6c6]" />
      <button aria-label="向右滚动" className="mr-1 ml-auto"><ScrollArrow dir="right" /></button>
    </div>
  </div>
);

const sheetTools = [
  { label: '上一对象', body: <path d="M4 0 1 3.500h2V5H1.500L4 4.500 1 8h2v1h2V8h2L4 4.500 6.500 5H5V3.500h2z" fill="#000" /> },
  { label: '对象', body: <circle cx="4" cy="4.500" r="2.600" fill="#e6004c" /> },
  { label: '下一对象', body: <path d="M1 0h6v1H5v1h2L4 5 1 2h2V1H1zM3 5h2v1h2L4 9 1 6h2z" fill="#000" /> },
];

const SheetScroll = () => (
  <div className="flex w-[14px] shrink-0 flex-col items-center">
    <button aria-label="向上滚动" className="flex h-[13px] items-center"><ScrollArrow dir="up" /></button>
    <div className="h-[197px] w-full bg-[#c6c6c6]" />
    <button aria-label="向下滚动" className="mt-auto flex h-4 items-center"><ScrollArrow dir="down" /></button>
    {sheetTools.map((t) => (
      <button key={t.label} aria-label={t.label} className="flex h-[14px] w-full items-center justify-center border-t border-[#d0d0d0]">
        <svg width="8" height="9" viewBox="0 0 8 9" aria-hidden="true">{t.body}</svg>
      </button>
    ))}
    <button aria-label="拆分" className="flex h-[14px] w-full items-center justify-center border-t border-[#d0d0d0]">
      <svg width="12" height="12" viewBox="0 0 12 12" fill="none" stroke="#505050" aria-hidden="true">
        <path d="M0 1.500h12M2.500 0v12M5.500 9V4.500H10M6 5l5 5.500" strokeWidth="1.300" />
      </svg>
    </button>
  </div>
);

/* ---------- sidebar ---------- */

const navIcons = [
  { label: '首页', tri: 'M12.500.500v12L6.500 6.500z', bar: 0.5 },
  { label: '上一页', tri: 'M10.500.500v12l-6-6z' },
  { label: '下一页', tri: 'M4.500.500v12l6-6z' },
  { label: '末页', tri: 'M1.500.500v12l6-6z', bar: 10.5 },
];

const PageNav = ({ height, disabled = 0 }: { height: string; disabled?: number }) => (
  <div className="flex gap-[6px]">
    {navIcons.map((n, i) => {
      const off = i < disabled;
      return (
        <button key={n.label} aria-label={n.label} disabled={off} className={`flex w-[25px] items-center justify-center border border-[#adadad] bg-[#e1e1e1] pb-px ${height}`}>
          <svg width="14" height="13" viewBox="0 0 14 13" fill={off ? '#d0d0d0' : '#8cb2f5'} stroke={off ? '#b4b4b4' : '#4682b4'} aria-hidden="true">
            <path d={n.tri} />
            {n.bar !== undefined && <rect x={n.bar} y=".5" width="2" height="12" />}
          </svg>
        </button>
      );
    })}
  </div>
);

const Sidebar = () => (
  <aside className="flex w-[258px] shrink-0">
    <div className="flex w-[13px] items-center border-l border-[#c8c8c8] pl-px">
      <button aria-label="折叠侧栏" className="flex h-10 w-[7px] items-center justify-center rounded-sm border border-[#909090] bg-white text-[#808080]">
        <svg width="3" height="5" viewBox="0 0 3 5" aria-hidden="true"><path d="M0 0v5l3-2.500z" fill="currentColor" /></svg>
      </button>
    </div>
    <div className="flex min-w-0 flex-1 flex-col">
      <div className="flex h-9 items-start gap-1 border-b border-[#d8d8d8] pt-[3px] pr-[6px]">
        <button aria-label="提示" className="flex size-6 items-center justify-center border border-[#66a7e8] bg-[#cce0f7]">
          <svg width="16" height="16" viewBox="0 0 16 16" aria-hidden="true">
            <circle cx="8" cy="8" r="8" fill="#4682b4" />
            <path d="M6 6.500h3L7.500 12H10" fill="none" stroke="#fff" strokeWidth="1.800" />
            <circle cx="9" cy="3.800" r="1.300" fill="#fff" />
          </svg>
        </button>
        <button aria-label="表格" className="flex h-6 items-center">
          <svg width="18" height="18" viewBox="0 0 18 18" aria-hidden="true">
            <path d="M0 0h18v18H0z" fill="#fff" />
            <path d="M1.500 1.500h3v3h-3zM6.500 1.500h10v3h-10zM11.500 1.500v3M1.500 6.500h3v10h-3zM1.500 11.500h3M6.500 6.500h10v10h-10zM11.500 6.500v10M6.500 11.500h10" fill="none" stroke="#707070" />
          </svg>
        </button>
        <button aria-label="侧栏选项" className="ml-auto flex h-6 items-center"><Caret className="text-black" /></button>
      </div>
      <div className="mt-[9px] mr-[3px] flex min-h-0 flex-1 overflow-hidden bg-white">
        <article className="flex-1 overflow-hidden pt-[14px] pl-[18px] font-['DejaVu_Sans',sans-serif] text-[11px] leading-[15px] text-black">
          <h2 className="font-['Noto_Sans',sans-serif] text-[26px] leading-[34px] font-semibold text-[#4673a3]">
            Welcome to
            <br />
            FreeOffice!
          </h2>
          <p className="mt-[14px] whitespace-nowrap">Thank you for choosing FreeOffice<br />as your new office suite.</p>
          <p className="mt-[15px] whitespace-nowrap">FreeOffice is free, friendly,<br />powerful and compatible with<br />Microsoft Office.</p>
          <p className="mt-[15px] whitespace-nowrap">
            This sidebar contains tips and<br />tricks for using FreeOffice. It<br />also shows the differences to<br />SoftMaker Office, the commercial<br />office suite from SoftMaker.
          </p>
          <h3 className="mt-[39px] mb-2 font-['Noto_Sans',sans-serif] text-xl leading-7 font-semibold text-[#4673a3]">Navigation</h3>
          <PageNav height="h-[25px]" />
          <p className="mt-[10px] whitespace-nowrap">You can use these four buttons to<br />navigate between the pages of this<br />sidebar.</p>
          <p className="mt-[15px] whitespace-nowrap">This lets you “fast-forward” to</p>
        </article>
        <div className="mr-px flex w-[15px] flex-col items-center bg-[#efefef]">
          <button aria-label="向上滚动" className="flex h-[15px] items-center"><ScrollArrow dir="up" /></button>
          <div className="h-[211px] w-full bg-[#c6c6c6]" />
          <button aria-label="向下滚动" className="mt-auto flex h-[15px] items-center"><ScrollArrow dir="down" /></button>
        </div>
      </div>
      <a href="#freeoffice" className="h-[31px] pl-px text-xs leading-[30px] whitespace-nowrap text-[#0000ff]">Visit the www.freeoffice.com web site</a>
      <div className="pb-[5px]">
        <PageNav height="h-[27px]" disabled={2} />
      </div>
    </div>
  </aside>
);

/* ---------- status bar ---------- */

const StatusBar = () => (
  <footer className="flex h-7 shrink-0 items-start border-t border-[#c0c0c0] pt-[2px] pl-[6px] text-xs text-black">
    <div className="grid min-w-0 flex-1 grid-cols-[570fr_183fr_160fr] gap-[5px] leading-[19px]">
      <div className="h-[21px] border border-[#d4d4d4] bg-white" />
      <div className="h-[21px] border border-[#d4d4d4] bg-white px-[3px]">工作表 1</div>
      <div className="h-[21px] border border-[#d4d4d4] bg-white" />
    </div>
    <div className="flex h-[21px] w-[357px] shrink-0 items-center">
      <svg width="18" height="17" viewBox="0 0 18 17" className="ml-[6px]" fill="none" stroke="#b0b0b0" strokeWidth="2.600" aria-hidden="true">
        <path d="M2.500 1v6h5M3 6.500C5 1.500 12 1 15.500 4.500V1" />
        <path d="M15.500 16v-6h-5M15 10.500c-2 5-9 5.500-12.500 2V16" />
      </svg>
      <button className="ml-[6px] h-[21px] w-[46px] border border-[#d4d4d4] bg-white">插入</button>
      <button className="ml-[5px] h-[21px] w-[46px] border border-[#d4d4d4] bg-white">自动</button>
      <button aria-label="缩小" className="ml-[10px] flex h-4 w-2 items-center"><span className="h-px w-2 bg-[#707070]" /></button>
      <input
        type="range"
        aria-label="缩放"
        min={0}
        max={200}
        defaultValue={98}
        className="mx-[6px] h-3 w-[110px] appearance-none bg-transparent [&::-webkit-slider-runnable-track]:h-px [&::-webkit-slider-runnable-track]:bg-[#d0d0d0] [&::-webkit-slider-thumb]:-mt-[5px] [&::-webkit-slider-thumb]:size-[11px] [&::-webkit-slider-thumb]:appearance-none [&::-webkit-slider-thumb]:rounded-full [&::-webkit-slider-thumb]:border [&::-webkit-slider-thumb]:border-[#707070] [&::-webkit-slider-thumb]:bg-white"
      />
      <button aria-label="放大" className="w-2">
        <svg width="8" height="8" viewBox="0 0 8 8" aria-hidden="true"><path d="M0 4.500h8M4.500 0v8" stroke="#707070" /></svg>
      </button>
      <span className="ml-[18px]">100%</span>
      <button aria-label="更多" className="ml-[6px] w-4 pb-2 text-sm leading-3 text-[#555]">»</button>
    </div>
  </footer>
);

/* faint diagonal mark repeated over the whole window */
const Watermark = () => (
  <svg className="pointer-events-none absolute inset-0 h-full w-full" aria-hidden="true">
    <defs>
      <pattern id="mark" width="265" height="266" patternUnits="userSpaceOnUse">
        <text
          transform="translate(28 196) rotate(-45)"
          fontFamily="Liberation Sans, sans-serif"
          fontSize="23"
          fill="none"
          stroke="#000"
          strokeOpacity=".035"
        >
          WWW.WEIDOWN.COM
        </text>
      </pattern>
    </defs>
    <rect width="100%" height="100%" fill="url(#mark)" />
  </svg>
);

const App: React.FC = () => (
  <div className={`relative flex h-screen flex-col overflow-hidden bg-[#efefef] ${uiFont}`}>
    <TitleBar />
    <Ribbon />
    <FormulaBar />
    <QuickBar />
    <main className="flex min-h-0 flex-1">
      <div className="flex min-w-0 flex-1 flex-col">
        <Sheet />
        <SheetTabs />
      </div>
      <SheetScroll />
      <Sidebar />
    </main>
    <StatusBar />
    <Watermark />
  </div>
);

export default App;
